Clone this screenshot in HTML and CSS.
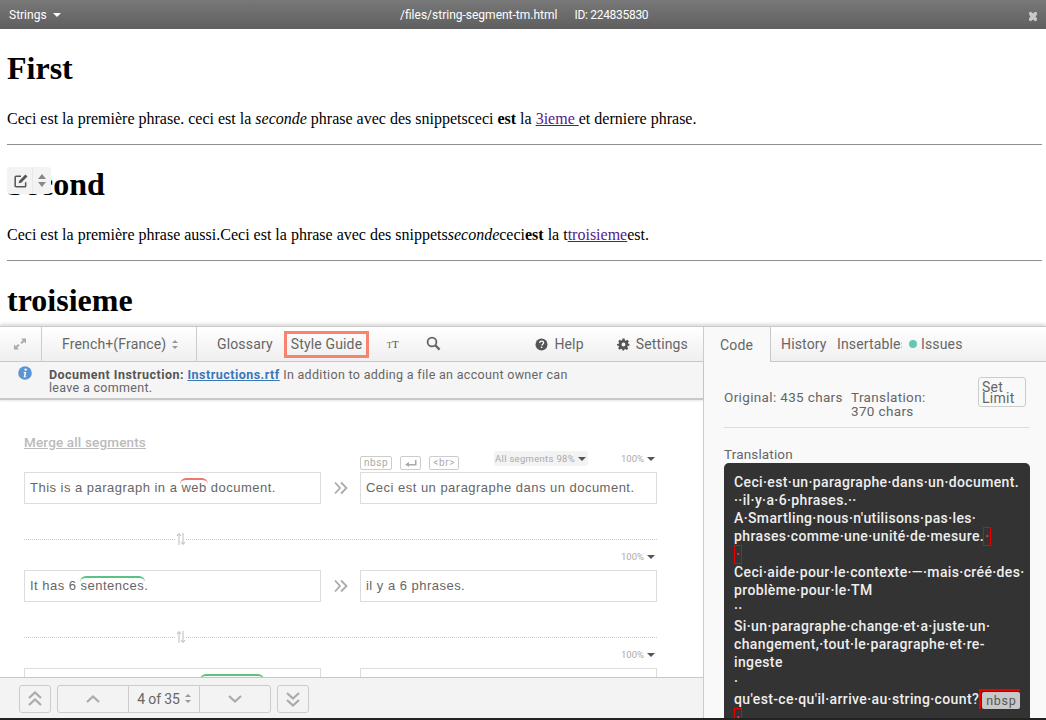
FILE: index.html
```html
<!DOCTYPE html>
<html lang="fr">
<head>
<meta charset="utf-8">
<title>Strings</title>
<link rel="stylesheet" href="styles.css">
</head>
<body>
<header class="topbar">
  <div class="topbar-left">Strings <span class="caret caret-white"></span></div>
  <div class="topbar-center"><span>/files/string-segment-tm.html</span><span class="topbar-id">ID: 224835830</span></div>
  <svg class="topbar-close" width="10" height="11" viewBox="0 0 10 11"><path d="M1 1.5 L3 .8 L5 2.5 L7 .8 L9 1.5 L9 3.5 L7.6 5.5 L9 7.5 L9 9.5 L7 10.2 L5 8.5 L3 10.2 L1 9.5 L1 7.5 L2.4 5.5 L1 3.5 Z" fill="#c8c8c8"/></svg>
</header>
<main class="doc">
  <h1>First</h1>
  <p>Ceci est la première phrase. ceci est la <em>seconde</em> phrase avec des snippetsceci <strong>est</strong> la <a href="#a">3ieme </a>et derniere phrase.</p>
  <hr>
  <h1>Second</h1>
  <p>Ceci est la première phrase aussi.Ceci est la phrase avec des snippets<em>seconde</em>ceci<strong>est</strong> la t<a href="#b">troisieme</a>est.</p>
  <hr>
  <h1>troisieme</h1>
</main>

<div class="edit-widget">
  <span class="edit-cell edit-cell-main">
    <svg width="14" height="14" viewBox="1 1 12 12"><path d="M11 8v3.200a.8.8 0 0 1-.8.8H2.800a.8.8 0 0 1-.8-.8V3.800a.8.8 0 0 1 .8-.8H7" fill="none" stroke="#555" stroke-width="1.300"/><path d="M5.500 6.800 10.800 1.500l1.700 1.700-5.300 5.300-2.200.5z" fill="#555"/></svg>
  </span>
  <span class="edit-cell"><span class="sort sort-edit"></span></span>
</div>

<section class="panel">
  <div class="workspace">
    <nav class="toolbar">
      <span class="tool tool-expand">
        <svg width="14" height="14" viewBox="0 0 14 14"><path d="M8 1.500h5v5l-1.800-1.800-2.400 2.400-1.400-1.400 2.400-2.400z" fill="#aaa"/><path d="M1 12.500v-5l1.800 1.800 2.400-2.400 1.400 1.400-2.400 2.400 1.800 1.800z" fill="#aaa"/></svg>
      </span>
      <span class="tool tool-locale">French+(France) <span class="sort"></span></span>
      <span class="tool tool-plain tool-glossary">Glossary</span>
      <span class="tool-guide">Style Guide</span>
      <span class="tool-font"><small>T</small>T</span>
      <svg class="tool-search" width="15" height="15" viewBox="0 0 15 15"><circle cx="6" cy="6" r="4.400" fill="none" stroke="#666" stroke-width="1.800"/><path d="M9.400 9.400 13.600 13.600" stroke="#666" stroke-width="2.200"/></svg>
      <span class="tool-right">
        <span class="tool-action">
          <svg width="13" height="13" viewBox="0 0 13 13"><circle cx="6.500" cy="6.500" r="6" fill="#555"/><path d="M4.600 5c.1-1.200 1-1.800 2-1.800s2 .6 2 1.600c0 1.400-1.700 1.400-1.700 2.600" fill="none" stroke="#fff" stroke-width="1.300"/><rect x="5.900" y="8.600" width="1.400" height="1.400" fill="#fff"/></svg>
          Help
        </span>
        <span class="tool-action">
          <svg width="13" height="13" viewBox="0 0 24 24"><path fill-rule="evenodd" fill="#555" d="M10 1h4l.6 3.200 1.900.8 2.700-1.800 2.800 2.800-1.800 2.700.8 1.900L23 11v3l-3.200.6-.8 1.900 1.800 2.700-2.800 2.800-2.700-1.800-1.900.8L13 23h-3l-.6-2.200-1.900-.8-2.700 1.800-2.800-2.800 1.800-2.700-.8-1.900L0 14v-3l3.200-.6.8-1.900L2.200 5.800 5 3l2.700 1.800 1.900-.8zM12 8.500a3.500 3.500 0 1 0 0 7 3.500 3.500 0 0 0 0-7z"/></svg>
          Settings
        </span>
      </span>
    </nav>
    <div class="notice">
      <svg class="notice-icon" width="14" height="14" viewBox="0 0 14 14"><circle cx="7" cy="7" r="6.800" fill="#5b93d3"/><circle cx="7.600" cy="3.600" r="1.200" fill="#fff"/><path d="M5.800 6h2.500l-1 4.200h1l-.3 1H5.600l1-4.200h-1z" fill="#fff"/></svg>
      <p class="notice-text"><b>Document Instruction:</b> <a href="#c">Instructions.rtf</a> In addition to adding a file an account owner can leave a comment.</p>
    </div>
    <div class="segments">
      <a class="merge" href="#d">Merge all segments</a>

      <div class="meta meta-first">
        <span class="tags"><span class="tag">nbsp</span><span class="tag tag-icon"><svg width="13" height="9" viewBox="0 0 13 9"><path d="M11 1v4H5V3L1 5.500 5 8V6.500h7.500V1z" fill="#aaa"/></svg></span><span class="tag">&lt;br&gt;</span></span>
        <span class="all-seg">All segments 98% <span class="caret"></span></span>
        <span class="pct">100% <span class="caret"></span></span>
      </div>
      <div class="seg-row">
        <div class="seg-box">This is a paragraph in a <span class="mark mark-red">web</span> document.</div>
        <svg class="seg-arrow" width="14" height="14" viewBox="0 0 14 14"><path d="M1 1.500 6 7l-5 5.500M7 1.500 12.500 7 7 12.500" fill="none" stroke="#aaa" stroke-width="1.800"/></svg>
        <div class="seg-box">Ceci est un paragraphe dans un document.</div>
      </div>
      <div class="divider"><svg class="swap" width="10" height="14" viewBox="0 0 10 14"><path d="M3 13V2M1 4l2-2.500L5 4M7 1v11M5 10l2 2.500L9 10" fill="none" stroke="#bbb" stroke-width="1"/></svg></div>

      <div class="meta"><span class="pct">100% <span class="caret"></span></span></div>
      <div class="seg-row">
        <div class="seg-box">It has 6 <span class="mark mark-green">sentences</span>.</div>
        <svg class="seg-arrow" width="14" height="14" viewBox="0 0 14 14"><path d="M1 1.500 6 7l-5 5.500M7 1.500 12.500 7 7 12.500" fill="none" stroke="#aaa" stroke-width="1.800"/></svg>
        <div class="seg-box">il y a 6 phrases.</div>
      </div>
      <div class="divider"><svg class="swap" width="10" height="14" viewBox="0 0 10 14"><path d="M3 13V2M1 4l2-2.500L5 4M7 1v11M5 10l2 2.500L9 10" fill="none" stroke="#bbb" stroke-width="1"/></svg></div>

      <div class="meta"><span class="pct">100% <span class="caret"></span></span></div>
      <div class="seg-row seg-row-last">
        <div class="seg-box"><span class="mark mark-green mark-third"></span></div>
        <span class="seg-arrow"></span>
        <div class="seg-box"></div>
      </div>
    </div>
    <footer class="pager">
      <button class="page-btn" type="button"><svg width="16" height="18" viewBox="0 0 16 18"><path d="M2 8 8 2.500 14 8M2 15l6-5.500 6 5.500" fill="none" stroke="#aaa" stroke-width="2.200"/></svg></button>
      <div class="page-group">
        <button class="page-cell" type="button"><svg width="14" height="8" viewBox="0 0 14 8"><path d="M1 7 7 1.500 13 7" fill="none" stroke="#aaa" stroke-width="2.200"/></svg></button>
        <span class="page-cell page-count">4 of 35 <span class="sort"></span></span>
        <button class="page-cell" type="button"><svg width="14" height="8" viewBox="0 0 14 8"><path d="M1 1 7 6.500 13 1" fill="none" stroke="#aaa" stroke-width="2.200"/></svg></button>
      </div>
      <button class="page-btn" type="button"><svg width="16" height="18" viewBox="0 0 16 18"><path d="M2 3l6 5.500L14 3M2 10l6 5.500 6-5.500" fill="none" stroke="#aaa" stroke-width="2.200"/></svg></button>
    </footer>
  </div>

  <aside class="side">
    <nav class="tabs">
      <span class="tab tab-active">Code</span>
      <span class="tab">History</span>
      <span class="tab tab-clip">Insertables</span>
      <span class="tab tab-issues"><span class="dot"></span>Issues</span>
    </nav>
    <div class="side-body">
      <div class="stats">
        <span class="stat-orig">Original: 435 chars</span>
        <span class="stat-trans">Translation:<br>370 chars</span>
        <button class="limit" type="button">Set<br>Limit</button>
      </div>
      <div class="code-label">Translation</div>
      <div class="code">
        <div>Ceci·est·un·paragraphe·dans·un·document.</div>
        <div>··il·y·a·6·phrases.··</div>
        <div>A·Smartling·nous·n'utilisons·pas·les·</div>
        <div>phrases·comme·une·unité·de·mesure.<span class="flag flag-inline">·</span></div>
        <div><span class="flag">·</span></div>
        <div>Ceci·aide·pour·le·contexte·—·mais·créé·des·</div>
        <div>problème·pour·le·TM</div>
        <div>··</div>
        <div>Si·un·paragraphe·change·et·a·juste·un·</div>
        <div>changement,·tout·le·paragraphe·et·re-</div>
        <div>ingeste</div>
        <div>·</div>
        <div>qu'est-ce·qu'il·arrive·au·string·count?<span class="nbsp-frame"><span class="nbsp">nbsp</span></span></div>
        <div><span class="flag">·</span></div>
      </div>
    </div>
  </aside>
</section>
</body>
</html>
```
FILE: styles.css
```css
* { box-sizing: border-box; }
html, body { height: 100%; }
body {
  margin: 0;
  overflow: hidden;
  position: relative;
  height: 720px;
  background: #fff;
  font-family: "Liberation Serif", "Times New Roman", serif;
}
.topbar {
  height: 29px;
  display: flex;
  align-items: center;
  padding: 0 8px 0 9px;
  background: linear-gradient(#787878, #5f5f5f);
  color: #fff;
  font: 12px/1 Roboto, sans-serif;
}
.topbar-left { width: 391px; display: flex; align-items: center; gap: 6px; }
.topbar-center { display: flex; gap: 17px; flex: 1; }
.topbar-id { letter-spacing: -.3px; }
.topbar-close { margin-top: 4px; }
.caret {
  display: inline-block;
  width: 0; height: 0;
  border: 4px solid transparent;
  border-top: 4px solid #555;
  border-bottom: 0;
  vertical-align: middle;
}
.caret-white { border-top-color: #fff; }
.doc { padding: 0 4px 0 7px; }
.doc h1 { font-size: 32px; margin: 21.44px 0; line-height: 37px; }
.doc p { font-size: 16px; line-height: 19px; margin: 16px 0; }
.doc hr { margin: 16px 0 0; border: 0; border-top: 1px solid #8f8f8f; height: 1px; }
.doc a { color: #551a8b; }

.edit-widget {
  position: absolute;
  left: 7px; top: 167px;
  width: 44px; height: 27px;
  display: flex;
  background: #f3f3f3;
  border-radius: 3px;
}
.edit-cell { display: flex; align-items: center; justify-content: center; flex: 0 0 18px; }
.edit-cell-main { flex: 0 0 26px; padding-left: 2px; border-right: 1px solid #e8e8e8; }
.sort { display: inline-block; width: 6px; height: 9px; position: relative; vertical-align: middle; }
.sort::before, .sort::after {
  content: "";
  position: absolute;
  left: 0; width: 0; height: 0;
  border-left: 3px solid transparent;
  border-right: 3px solid transparent;
}
.sort::before { top: 0; border-bottom: 3px solid #999; }
.sort::after { bottom: 0; border-top: 3px solid #999; }
.sort-edit { width: 8px; height: 13px; }
.sort-edit::before { border-left-width: 4px; border-right-width: 4px; border-bottom: 5px solid #888; }
.sort-edit::after { border-left-width: 4px; border-right-width: 4px; border-top: 5px solid #888; }

.panel {
  position: absolute;
  left: 0; right: 0; top: 326px; bottom: 0;
  display: flex;
  background: #fff;
  border-top: 1px solid #ccc;
  border-bottom: 2px solid #222;
  box-shadow: 0 -2px 3px rgba(0,0,0,.15);
  color: #666;
  font: 14px/1 Roboto, sans-serif;
  letter-spacing: .15px;
}
.workspace { width: 704px; display: flex; flex-direction: column; border-right: 1px solid #ccc; }
.toolbar {
  height: 35px;
  flex: none;
  display: flex;
  align-items: center;
  background: linear-gradient(#fff, #efefef);
  border-bottom: 1px solid #c8c8c8;
}
.tool { height: 100%; display: flex; align-items: center; }
.tool-expand { width: 42px; justify-content: center; padding-right: 2px; border-right: 1px solid #ccc; }
.tool-locale { width: 155px; padding-left: 20px; gap: 6px; border-right: 1px solid #ccc; }
.tool-plain { padding-left: 20px; }
.tool-glossary { width: 87px; }
.tool-guide {
  width: 85px; height: 27px;
  display: flex; align-items: center; justify-content: center;
  border: 3px solid #f8836f;
  white-space: nowrap;
}
.tool-font { margin-left: 18px; width: 39px; font: 11px "Liberation Serif", serif; letter-spacing: 0; color: #555; }
.tool-font small { font-size: 8px; }
.tool-search { margin-top: -2px; }
.tool-right { margin-left: auto; display: flex; gap: 33px; padding-right: 15px; }
.tool-action { display: flex; align-items: center; gap: 6px; }

.notice {
  height: 38px;
  flex: none;
  display: flex;
  background: #f5f5f5;
  border-bottom: 2px solid #c8c8c8;
  box-shadow: 0 1px 2px rgba(0,0,0,.1);
  padding: 4px 0 0 18px;
}
.notice-icon { flex: none; }
.notice-text { margin: 2px 0 0 17px; width: 540px; font-size: 12.5px; line-height: 13px; letter-spacing: .31px; }
.notice-text b { color: #555; letter-spacing: .47px; }
.notice-text a { color: #3a78b8; font-weight: 700; letter-spacing: .48px; }

.segments { flex: 1; min-height: 0; overflow: hidden; padding: 35px 46px 0 24px; }
.merge { display: block; height: 15px; color: #bbb; font-weight: 500; font-size: 13.5px; line-height: 15px; }
.meta {
  height: 30px;
  padding-left: 336px;
  display: flex;
  position: relative;
  justify-content: flex-end;
  align-items: center;
  font-size: 9.5px;
  color: #aaa;
  letter-spacing: 0;
}
.meta-first { margin-top: 6px; height: 16px; justify-content: flex-start; align-items: flex-start; }
.tags { display: flex; gap: 8px; }
.tag {
  height: 14px;
  padding: 0 3px;
  border: 1px solid #ccc;
  border-radius: 2px;
  font-size: 10px;
  letter-spacing: .6px;
  line-height: 12px;
  color: #aaa;
  display: flex;
  align-items: center;
}
.all-seg { margin-left: 35px; height: 15px; margin-top: -5px; padding: 0 2px 0 1px; display: flex; gap: 3px; align-items: center; background: #f3f3f3; border-radius: 3px; white-space: nowrap; letter-spacing: .3px; }
.pct { margin-left: auto; padding-right: 2px; display: flex; gap: 3px; align-items: center; }
.meta-first .pct { margin-top: -2px; height: 10px; }
.meta > .pct:only-child { margin-top: 4px; }
.seg-row { display: grid; grid-template-columns: 297px 39px 297px; align-items: center; height: 32px; }
.seg-row-last { height: 40px; align-items: start; }
.seg-row-last .seg-box { height: 40px; align-items: flex-start; }
.seg-box {
  height: 32px;
  display: flex;
  align-items: center;
  white-space: pre;
  padding: 0 5px 2px;
  border: 1px solid #ddd;
  font-family: "Liberation Sans", Arial, sans-serif;
  font-size: 13px;
  letter-spacing: .48px;
  color: #666;
}
.seg-arrow { justify-self: start; margin-left: 13px; }
.mark { position: relative; }
.mark::before {
  content: "";
  position: absolute;
  left: -1px; right: -1px; top: -3px;
  height: 6px;
  border-top: 2px solid;
  border-radius: 6px 6px 0 0;
}
.mark-red::before { border-color: #f0776a; }
.mark-green::before { border-color: #5cc281; }
.mark-third { display: block; width: 62px; height: 10px; margin: 8px 0 0 171px; }
.divider { height: 36px; position: relative; display: flex; justify-content: center; }
.divider::before {
  content: "";
  position: absolute;
  left: 0; right: 0; top: 35px;
  border-top: 1px dotted #ccc;
}
.swap { position: absolute; left: 152px; top: 28px; background: #fff; }

.pager {
  height: 41px;
  flex: none;
  display: flex;
  align-items: center;
  gap: 6px;
  padding: 1px 0 0 19px;
  background: #f3f3f3;
  border-top: 1px solid #c8c8c8;
}
.page-btn {
  width: 32px; height: 28px;
  padding: 0;
  display: flex; align-items: center; justify-content: center;
  background: #f3f3f3;
  border: 1px solid #ccc;
  border-radius: 3px;
}
.page-group { display: flex; width: 214px; height: 28px; border: 1px solid #ccc; border-radius: 3px; }
.page-cell {
  flex: 1;
  padding: 0;
  display: flex; align-items: center; justify-content: center;
  gap: 5px;
  background: transparent;
  border: 0;
  font-size: 14px;
  letter-spacing: -.1px;
  color: #666;
}
.page-count { border-left: 1px solid #ccc; border-right: 1px solid #ccc; white-space: nowrap; }

.side { flex: 1; min-width: 0; display: flex; flex-direction: column; background: #f9f9f9; }
.tabs {
  height: 35px;
  flex: none;
  display: flex;
  align-items: center;
  background: linear-gradient(#fff, #efefef);
}
.tab { height: 100%; display: flex; align-items: center; border-bottom: 1px solid #c8c8c8; white-space: nowrap; }
.tab:nth-child(2) { padding-left: 10px; width: 66px; }
.tab-active { width: 67px; padding-left: 16px; background: #f9f9f9; border-right: 1px solid #c8c8c8; border-bottom: 0; }
.tab-clip { width: 65px; overflow: hidden; }
.tab-issues { flex: 1; gap: 4px; padding-left: 7px; }
.dot { width: 8px; height: 8px; border-radius: 50%; background: #63c7b2; }

.side-body { flex: 1; min-height: 0; padding: 0 16px 0 20px; overflow: hidden; display: flex; flex-direction: column; }
.stats {
  height: 66px;
  flex: none;
  display: flex;
  align-items: flex-start;
  padding-top: 15px;
  border-bottom: 1px solid #ddd;
  font-size: 13.5px;
  line-height: 14px;
  letter-spacing: .35px;
}
.stat-orig { margin-top: 13px; width: 127px; white-space: nowrap; }
.stat-trans { margin-top: 13px; width: 127px; }
.limit {
  width: 48px; height: 30px;
  padding: 1px 0 0 3px;
  text-align: left;
  background: #f9f9f9;
  border: 1px solid #ccc;
  border-radius: 3px;
  font: 14px/11px Roboto, sans-serif;
  letter-spacing: .3px;
  color: #666;
}
.code-label { flex: none; margin-top: 19px; height: 16px; line-height: 14px; font-size: 13.5px; }
.code {
  flex: 1;
  padding: 9.5px 0 0 10px;
  background: #333;
  border-radius: 5px 5px 0 0;
  color: #eee;
  font-size: 14px;
  font-weight: 500;
  line-height: 18.1px;
  letter-spacing: .37px;
  white-space: nowrap;
}
.flag {
  display: inline-block;
  width: 8px; height: 19px;
  margin-bottom: -1px;
  border: 1px solid #e00;
  color: #f33;
  line-height: 17px;
  text-align: center;
  vertical-align: top;
  letter-spacing: 0;
}
.flag-inline { margin-left: -1px; }
.nbsp-frame {
  display: inline-block;
  height: 20px;
  margin: -1px 0 -1px 0;
  padding: 1px 0 0 1px;
  border-top: 2px solid #e00;
  border-left: 2px solid #e00;
  vertical-align: top;
}
.nbsp {
  display: block;
  height: 17px;
  padding: 0 4px;
  background: #c8c8c8;
  color: #555;
  font-size: 12.5px;
  font-weight: 400;
  line-height: 17px;
  letter-spacing: .7px;
  border-radius: 2px;
}
```
